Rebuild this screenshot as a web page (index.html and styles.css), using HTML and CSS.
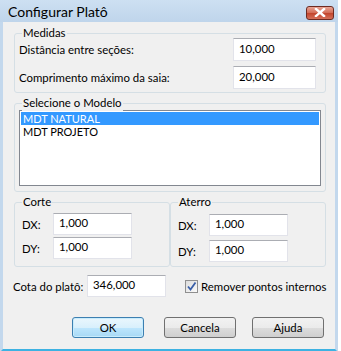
FILE: index.html
```html
<!DOCTYPE html>
<html>
<head>
    <title>Configurar Platô</title>
    <link rel="stylesheet" href="styles.css">
</head>
<body>
    <div class="janela">
        <div class="barra-titulo">
            <span class="titulo">Configurar Platô</span>
            <button class="fechar" title="Fechar">
                <svg width="12" height="9" viewBox="0 0 12 9">
                    <path d="M2 1 L10 8 M10 1 L2 8" stroke="#fff" stroke-width="2.4" stroke-linecap="square"/>
                </svg>
            </button>
        </div>
        <div class="corpo">
            <div class="grupo grupo-medidas">
                <span class="grupo-titulo">Medidas</span>
                <div class="linha">
                    <label>Distância entre seções:</label>
                    <input type="text" class="campo campo-medida" value="10,000">
                </div>
                <div class="linha">
                    <label>Comprimento máximo da saia:</label>
                    <input type="text" class="campo campo-medida" value="20,000">
                </div>
            </div>

            <div class="grupo grupo-modelo">
                <span class="grupo-titulo">Selecione o Modelo</span>
                <div class="lista">
                    <div class="item selecionado">MDT NATURAL</div>
                    <div class="item">MDT PROJETO</div>
                </div>
            </div>

            <div class="pares">
                <div class="grupo grupo-corte">
                    <span class="grupo-titulo">Corte</span>
                    <div class="linha-curta">
                        <label>DX:</label>
                        <input type="text" class="campo" value="1,000">
                    </div>
                    <div class="linha-curta">
                        <label>DY:</label>
                        <input type="text" class="campo" value="1,000">
                    </div>
                </div>
                <div class="grupo grupo-aterro">
                    <span class="grupo-titulo">Aterro</span>
                    <div class="linha-curta">
                        <label>DX:</label>
                        <input type="text" class="campo" value="1,000">
                    </div>
                    <div class="linha-curta">
                        <label>DY:</label>
                        <input type="text" class="campo" value="1,000">
                    </div>
                </div>
            </div>

            <div class="cota">
                <label class="cota-rotulo">Cota do platô:</label>
                <input type="text" class="campo" value="346,000">
                <span class="caixa-marcar">
                    <svg width="11" height="11" viewBox="0 0 11 11">
                        <path d="M2 5.5 L4.5 8.5 L9.5 1.5" fill="none" stroke="#3a5fa8" stroke-width="1.8"/>
                    </svg>
                </span>
                <span class="marcar-rotulo">Remover pontos internos</span>
            </div>

            <div class="botoes">
                <button class="botao botao-padrao">OK</button>
                <button class="botao botao-cancela">Cancela</button>
                <button class="botao botao-ajuda">Ajuda</button>
            </div>
        </div>
    </div>
</body>
</html>
```

FILE: styles.css
```css
body {
    margin: 0;
    background-color: #fff;
    font-family: Lato, 'Noto Sans', sans-serif;
    font-size: 11.4px;
    color: #000;
}
.janela {
    width: 332px;
    border-left: 3px solid #c3d8ed;
    border-right: 3px solid #c3d8ed;
    border-bottom: 3px solid #3db2e2;
    background-color: #f0f0f0;
}
.barra-titulo {
    height: 22px;
    display: flex;
    align-items: center;
    justify-content: space-between;
    margin: 0 -3px;
    padding: 0 4px 0 8px;
    background: linear-gradient(#cde0f2, #bfd5eb);
}
.titulo {
    font-size: 14px;
    color: #000;
    margin-top: 1px;
}
.fechar {
    width: 28px;
    height: 14px;
    margin-top: 3px;
    padding: 0;
    border: 1px solid #6d2b22;
    border-radius: 3px;
    background: linear-gradient(#e9a595, #d26a54 50%, #c2442c 51%, #d5705a);
    display: flex;
    align-items: center;
    justify-content: center;
}
.corpo {
    padding: 11px 9px 11px 11px;
}
label,
.marcar-rotulo,
.grupo-titulo {
    white-space: nowrap;
    flex-shrink: 0;
}
.grupo {
    position: relative;
    border: 1px solid #d5dfe5;
    border-radius: 3px;
    box-sizing: border-box;
}
.grupo-titulo {
    position: absolute;
    top: -9px;
    left: 7px;
    padding: 0 1px;
    background-color: #f0f0f0;
    line-height: 16px;
}
.grupo-medidas {
    height: 60px;
    padding: 4px 9px 0 4px;
    display: flex;
    flex-direction: column;
    gap: 5px;
}
.linha {
    display: flex;
    justify-content: space-between;
    align-items: center;
}
.campo {
    width: 79px;
    height: 22px;
    flex-shrink: 0;
    box-sizing: border-box;
    border: 1px solid #e2e3ea;
    border-top-color: #abadb3;
    background: #fff;
    font-family: inherit;
    font-size: 11.4px;
    padding: 0 0 3px 5px;
    margin: 0;
    outline: none;
}
.campo-medida {
    width: 83px;
    height: 23px;
}
.grupo-modelo {
    height: 89px;
    margin-top: 10px;
    padding: 6px 4px 0 4px;
}
.lista {
    height: 76px;
    box-sizing: border-box;
    border: 1px solid #828790;
    background: #fff;
    padding: 1px;
}
.item {
    height: 13px;
    line-height: 13px;
    font-size: 11px;
    padding-left: 2px;
    overflow: hidden;
}
.selecionado {
    background-color: #3399ff;
    color: #fff;
}
.pares {
    display: flex;
    margin-top: 10px;
}
.grupo-corte,
.grupo-aterro {
    flex: 1;
    height: 65px;
    padding: 10px 0 0 7px;
    display: flex;
    flex-direction: column;
    gap: 2px;
}
.grupo-aterro {
    padding-top: 11px;
    gap: 4px;
}
.linha-curta {
    display: flex;
    align-items: center;
}
.linha-curta label {
    width: 31px;
}
.cota {
    display: flex;
    align-items: center;
    margin-top: 8px;
    margin-left: -1px;
}
.cota-rotulo {
    width: 74px;
}
.caixa-marcar {
    width: 11px;
    height: 11px;
    flex-shrink: 0;
    margin-left: 19px;
    margin-right: 3px;
    border: 1px solid #8f8f8f;
    background: linear-gradient(135deg, #dcdcdc, #fbfbfb);
    display: flex;
}
.botoes {
    display: flex;
    margin-top: 20px;
    padding-left: 58px;
}
.botao {
    width: 72px;
    height: 21px;
    padding: 0;
    border: 1px solid #707070;
    border-radius: 3px;
    background: linear-gradient(#f2f2f2, #ebebeb 50%, #dddddd 51%, #cfcfcf);
    font-family: inherit;
    font-size: 11.4px;
    color: #000;
}
.botao-padrao {
    border-color: #3c7fb1;
    background: linear-gradient(#eaf6fd, #d9f0fc 50%, #bee6fd 51%, #a7d9f5);
    box-shadow: inset 0 0 0 1px #c8ecfc;
}
.botao-cancela {
    margin-left: 20px;
}
.botao-ajuda {
    margin-left: 16px;
}
```
